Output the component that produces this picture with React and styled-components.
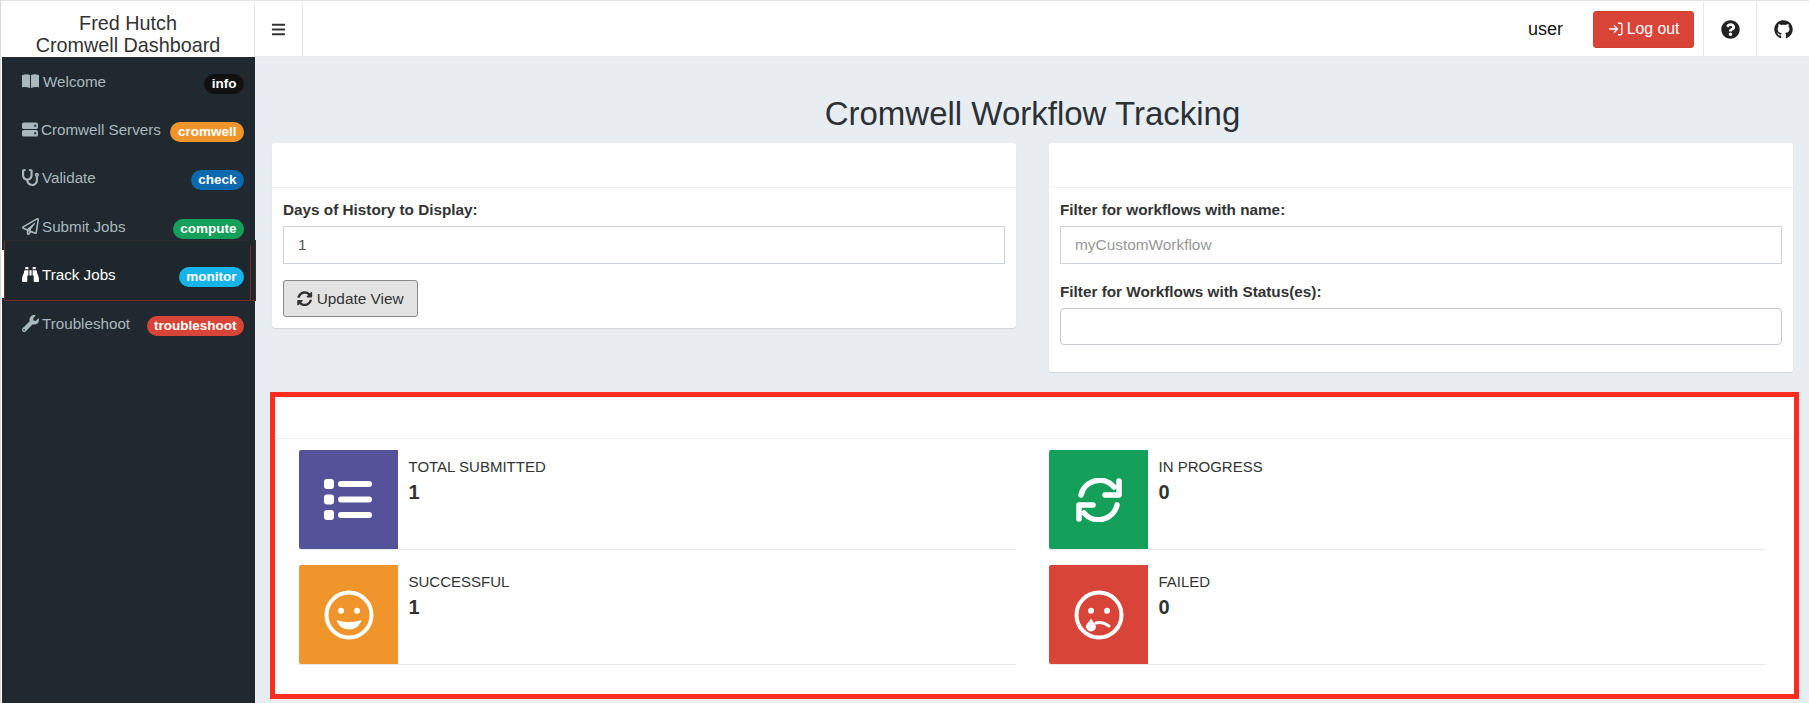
import React from 'react';
import styled, { createGlobalStyle } from 'styled-components';
import {
  FaStethoscope,
  FaRegPaperPlane,
  FaBinoculars,
  FaWrench,
  FaBars,
  FaQuestionCircle,
  FaGithub,
  FaSyncAlt,
} from 'react-icons/fa';

const GlobalStyle = createGlobalStyle`
  html, body {
    margin: 0;
    padding: 0;
    height: 100%;
    background: #e8edf2;
    font-family: "Liberation Sans", Arial, sans-serif;
    color: #333;
  }
`;

const Shell = styled.div`
  width: 1809px;
  height: 703px;
  overflow: hidden;
  box-sizing: border-box;
  padding: 1px 0 0 1px;
  display: grid;
  grid-template-columns: 253px 1fr;
  grid-template-rows: 55px 1fr;
  background: #fff;
  border-top: 1px solid #e3e3e3;
  border-left: 1px solid #d9d9d9;
`;
const Brand = styled.div`
  background: #fff;
  border-right: 1px solid #e6e8eb;
  text-align: center;
  font-size: 19.8px;
  line-height: 22px;
  color: #333;
  padding-top: 10px;
  box-sizing: border-box;
  white-space: nowrap;
`;
const TopBar = styled.header`
  display: flex;
  align-items: stretch;
  background: #fff;
  border-bottom: 1px solid #e4e7ea;
  box-shadow: 0 1px 1px rgba(0, 0, 0, 0.03);
`;
const MenuToggle = styled.div`
  width: 47px;
  display: flex;
  align-items: center;
  justify-content: center;
  border-right: 1px solid #e6e8eb;
  font-size: 15px;
  color: #333;
`;
const UserName = styled.div`
  margin-left: auto;
  align-self: center;
  font-size: 18px;
  color: #111;
  margin-right: 30px;
  padding-top: 1px;
`;
const LogoutButton = styled.button`
  align-self: center;
  height: 37px;
  width: 101px;
  margin-right: 9px;
  display: flex;
  align-items: center;
  justify-content: center;
  gap: 4px;
  border: 1px solid #d0402f;
  border-radius: 3px;
  background: #d94438;
  color: #fff;
  font: 15.8px "Liberation Sans", Arial, sans-serif;
  padding: 0;
`;
const IconCell = styled.div`
  width: 53px;
  display: flex;
  align-items: center;
  justify-content: center;
  border-left: 1px solid #e6e8eb;
  box-sizing: border-box;
  font-size: 19px;
  color: #222;
`;
const Sidebar = styled.nav`
  background: #20292f;
  position: relative;
`;
const NavItem = styled.div`
  height: 48.4px;
  padding: 0 11px 0 20px;
  display: flex;
  align-items: center;
  box-sizing: border-box;
  font-size: 15.2px;
  color: #a9b8be;
  svg {
    font-size: 17px;
    margin-right: 3px;
    flex: none;
  }
`;
// the selected row sits 2px in and sticks out over the row above
const ActiveNavItem = styled(NavItem)`
  height: 61px;
  width: 252px;
  margin: -10.6px 0 -2px 2px;
  padding: 9px 11px 0 17px;
  position: relative;
  color: #fff;
  background: #1e272c;
  border: 1px solid #7a2a22;
  border-top-color: #2b2b2b;
  border-right-color: #333;
  &::before {
    content: '';
    position: absolute;
    left: -3px;
    top: 9px;
    bottom: 2px;
    width: 2px;
    background: #fff;
  }
  &::after {
    content: '';
    position: absolute;
    right: 4px;
    top: 4px;
    bottom: 0;
    width: 1px;
    background: #7a2a22;
  }
`;
const NavLabel = styled.span`
  flex: 1;
  white-space: nowrap;
`;
const Pill = styled.span`
  background: ${p => p.$color};
  color: #fff;
  font-size: 13.5px;
  font-weight: 700;
  line-height: 20px;
  height: 20px;
  padding: 0 7.5px;
  border-radius: 10px;
  white-space: nowrap;
  margin-top: 5px;
`;
const Content = styled.main`
  background: #e8edf2;
  padding: 0 16px 0 17px;
  min-width: 0;
`;
const PageTitle = styled.h1`
  margin: 37px 0 0;
  font-weight: 400;
  font-size: 33px;
  line-height: 40px;
  text-align: center;
  color: #2c3136;
  height: 49px;
`;
const FilterRow = styled.div`
  display: grid;
  grid-template-columns: 1fr 1fr;
  column-gap: 33px;
  align-items: start;
`;
const Card = styled.section`
  background: #fff;
  border-radius: 3px;
  box-shadow: 0 1px 1px rgba(0, 0, 0, 0.1);
`;
const CardHeader = styled.div`
  height: 44px;
  border-bottom: 1px solid #f0f2f4;
`;
const CardBody = styled.div`
  padding: 11px 11px 11px;
`;
const FieldLabel = styled.label`
  display: block;
  font-size: 15.3px;
  font-weight: 700;
  line-height: 22px;
  margin-bottom: 5px;
  color: #333;
`;
const StatusLabel = styled(FieldLabel)`
  padding-top: 1px;
`;
const TextField = styled.input`
  display: block;
  width: 100%;
  box-sizing: border-box;
  height: 38px;
  padding: 0 14px;
  border: 1px solid #cdd2dd;
  font: 15.4px "Liberation Sans", Arial, sans-serif;
  color: #555;
  margin-bottom: 16px;
  &::placeholder {
    color: #999;
  }
`;
const StatusField = styled(TextField)`
  height: 37px;
  border-color: #c4c7cc;
  border-radius: 4px;
`;
const UpdateButton = styled.button`
  height: 37px;
  width: 135px;
  display: flex;
  align-items: center;
  justify-content: center;
  gap: 4px;
  background: #e3e3e3;
  border: 1px solid #8a8a8a;
  border-radius: 3px;
  color: #333;
  font: 15.4px "Liberation Sans", Arial, sans-serif;
  padding: 0;
`;
const Callout = styled.section`
  height: 307px;
  box-sizing: border-box;
  background: #fff;
  border: 5px solid #ff2d20;
  margin: 20px -6px 0 -2.5px;
`;
const CalloutHeader = styled.div`
  height: 41px;
  border-bottom: 1px solid #f0f0f0;
`;
const StatGrid = styled.div`
  display: grid;
  grid-template-columns: 717px 716px;
  column-gap: 33px;
  row-gap: 15px;
  padding: 11px 0 0 24.5px;
`;
const Stat = styled.div`
  display: flex;
  border-bottom: 1px solid #e8eaec;
`;
const StatIcon = styled.div`
  width: 99px;
  height: 99px;
  flex: none;
  display: flex;
  align-items: center;
  justify-content: center;
  background: ${p => p.$color};
  border-radius: 2px 0 0 2px;
`;
const StatText = styled.div`
  padding: 7px 10.5px;
`;
const StatLabel = styled.div`
  font-size: 15px;
  line-height: 20px;
  color: #333;
  text-transform: uppercase;
`;
const StatValue = styled.div`
  font-size: 20px;
  font-weight: 700;
  line-height: 20px;
  margin-top: 5px;
  color: #333;
`;

const BookIcon = () => (
  <svg width="18" height="14" viewBox="0 0 18 14" fill="currentColor">
    <path d="M0 1.2Q4-.6 8 1v13Q4 12.4 0 13.2z" />
    <path d="M9 1q4-1.600 8 .2v12Q13 12.400 9 14z" />
  </svg>
);

const ServerIcon = () => (
  <svg width="16" height="15" viewBox="0 0 17 15" fill="currentColor">
    <path fillRule="evenodd" d="M2 0h13a2 2 0 0 1 2 2v3a2 2 0 0 1-2 2H2a2 2 0 0 1-2-2V2a2 2 0 0 1 2-2zm11 2.500v2h2v-2z" />
    <path fillRule="evenodd" d="M2 8h13a2 2 0 0 1 2 2v3a2 2 0 0 1-2 2H2a2 2 0 0 1-2-2v-3a2 2 0 0 1 2-2zm11 2.500v2h2v-2z" />
  </svg>
);

// the log out arrow in the button is a light one, react-icons only has the solid
const SignInIcon = () => (
  <svg width="15" height="14" viewBox="0 0 15 14" fill="none" stroke="#fff" strokeWidth="1.4">
    <path d="M1 7h8M6 3.500L9.500 7 6 10.500" />
    <path d="M10 1.200h2.500a1.300 1.300 0 0 1 1.300 1.300v9a1.300 1.300 0 0 1-1.300 1.300H10" />
  </svg>
);

const ListIcon = () => (
  <svg width="49" height="41" viewBox="0 0 49 41" fill="#fff">
    <rect x="0" y="0" width="10" height="10" rx="3" />
    <rect x="0" y="15.500" width="10" height="10" rx="3" />
    <rect x="0" y="31" width="10" height="10" rx="3" />
    <rect x="14" y="2" width="34" height="6" rx="3" />
    <rect x="14" y="17.500" width="34" height="6" rx="3" />
    <rect x="14" y="33" width="34" height="6" rx="3" />
  </svg>
);

const ProgressIcon = () => (
  <svg width="46" height="44" viewBox="0 0 46 44" fill="none" stroke="#fff" strokeWidth="5.500" strokeLinecap="round" strokeLinejoin="round">
    <path d="M5 17A19 19 0 0 1 38 9" />
    <path d="M43 3V17H29" />
    <path d="M41 27A19 19 0 0 1 8 35" />
    <path d="M3 41V27H17" />
  </svg>
);

const SmileIcon = () => (
  <svg width="50" height="50" viewBox="-25 -25 50 50">
    <circle r="22.500" fill="none" stroke="#fff" strokeWidth="4" />
    <circle cx="-8" cy="-4.300" r="3" fill="#fff" />
    <circle cx="8" cy="-4.300" r="3" fill="#fff" />
    <path d="M-12 5.700Q0 9.500 12 5.700Q9 14 0 14Q-9 14-12 5.700Z" fill="#fff" stroke="#fff" strokeLinejoin="round" />
  </svg>
);

const SadIcon = () => (
  <svg width="50" height="50" viewBox="-25 -25 50 50">
    <circle r="22.500" fill="none" stroke="#fff" strokeWidth="4" />
    <circle cx="-8" cy="-4.300" r="3" fill="#fff" />
    <circle cx="8" cy="-4.300" r="3" fill="#fff" />
    <path d="M-3 8Q3 6 10 11" fill="none" stroke="#fff" strokeWidth="3" strokeLinecap="round" />
    <path d="M-8 3.500C-6 7-3 9-3 11.500A5 5 0 0 1-13 11.500C-13 9-10 7-8 3.500Z" fill="#fff" />
  </svg>
);

const NAV = [
  { label: 'Welcome', icon: <BookIcon />, badge: 'info', color: '#111111' },
  { label: 'Cromwell Servers', icon: <ServerIcon />, badge: 'cromwell', color: '#f0952c' },
  { label: 'Validate', icon: <FaStethoscope />, badge: 'check', color: '#0b69ad' },
  { label: 'Submit Jobs', icon: <FaRegPaperPlane />, badge: 'compute', color: '#14a05a' },
  { label: 'Track Jobs', icon: <FaBinoculars />, badge: 'monitor', color: '#16b4e8', active: true },
  { label: 'Troubleshoot', icon: <FaWrench />, badge: 'troubleshoot', color: '#d94438' },
];

const STATS = [
  { label: 'Total submitted', value: 1, color: '#555299', icon: <ListIcon /> },
  { label: 'In progress', value: 0, color: '#14a05a', icon: <ProgressIcon /> },
  { label: 'Successful', value: 1, color: '#f0952c', icon: <SmileIcon /> },
  { label: 'Failed', value: 0, color: '#d94438', icon: <SadIcon /> },
];

const App = () => (
  <>
    <GlobalStyle />
    <Shell>
      <Brand>
        Fred Hutch
        <br />
        Cromwell Dashboard
      </Brand>
      <TopBar>
        <MenuToggle>
          <FaBars />
        </MenuToggle>
        <UserName>user</UserName>
        <LogoutButton>
          <SignInIcon /> Log out
        </LogoutButton>
        <IconCell>
          <FaQuestionCircle />
        </IconCell>
        <IconCell>
          <FaGithub />
        </IconCell>
      </TopBar>
      <Sidebar>
        {NAV.map(({ label, icon, badge, color, active }) => {
          const Row = active ? ActiveNavItem : NavItem;
          return (
            <Row key={label}>
              {icon}
              <NavLabel>{label}</NavLabel>
              <Pill $color={color}>{badge}</Pill>
            </Row>
          );
        })}
      </Sidebar>
      <Content>
        <PageTitle>Cromwell Workflow Tracking</PageTitle>
        <FilterRow>
          <Card>
            <CardHeader />
            <CardBody>
              <FieldLabel>Days of History to Display:</FieldLabel>
              <TextField defaultValue="1" />
              <UpdateButton>
                <FaSyncAlt /> Update View
              </UpdateButton>
            </CardBody>
          </Card>
          <Card>
            <CardHeader />
            <CardBody>
              <FieldLabel>Filter for workflows with name:</FieldLabel>
              <TextField placeholder="myCustomWorkflow" />
              <StatusLabel>Filter for Workflows with Status(es):</StatusLabel>
              <StatusField />
            </CardBody>
          </Card>
        </FilterRow>
        <Callout>
          <CalloutHeader />
          <StatGrid>
            {STATS.map(s => (
              <Stat key={s.label}>
                <StatIcon $color={s.color}>{s.icon}</StatIcon>
                <StatText>
                  <StatLabel>{s.label}</StatLabel>
                  <StatValue>{s.value}</StatValue>
                </StatText>
              </Stat>
            ))}
          </StatGrid>
        </Callout>
      </Content>
    </Shell>
  </>
);

export default App;
